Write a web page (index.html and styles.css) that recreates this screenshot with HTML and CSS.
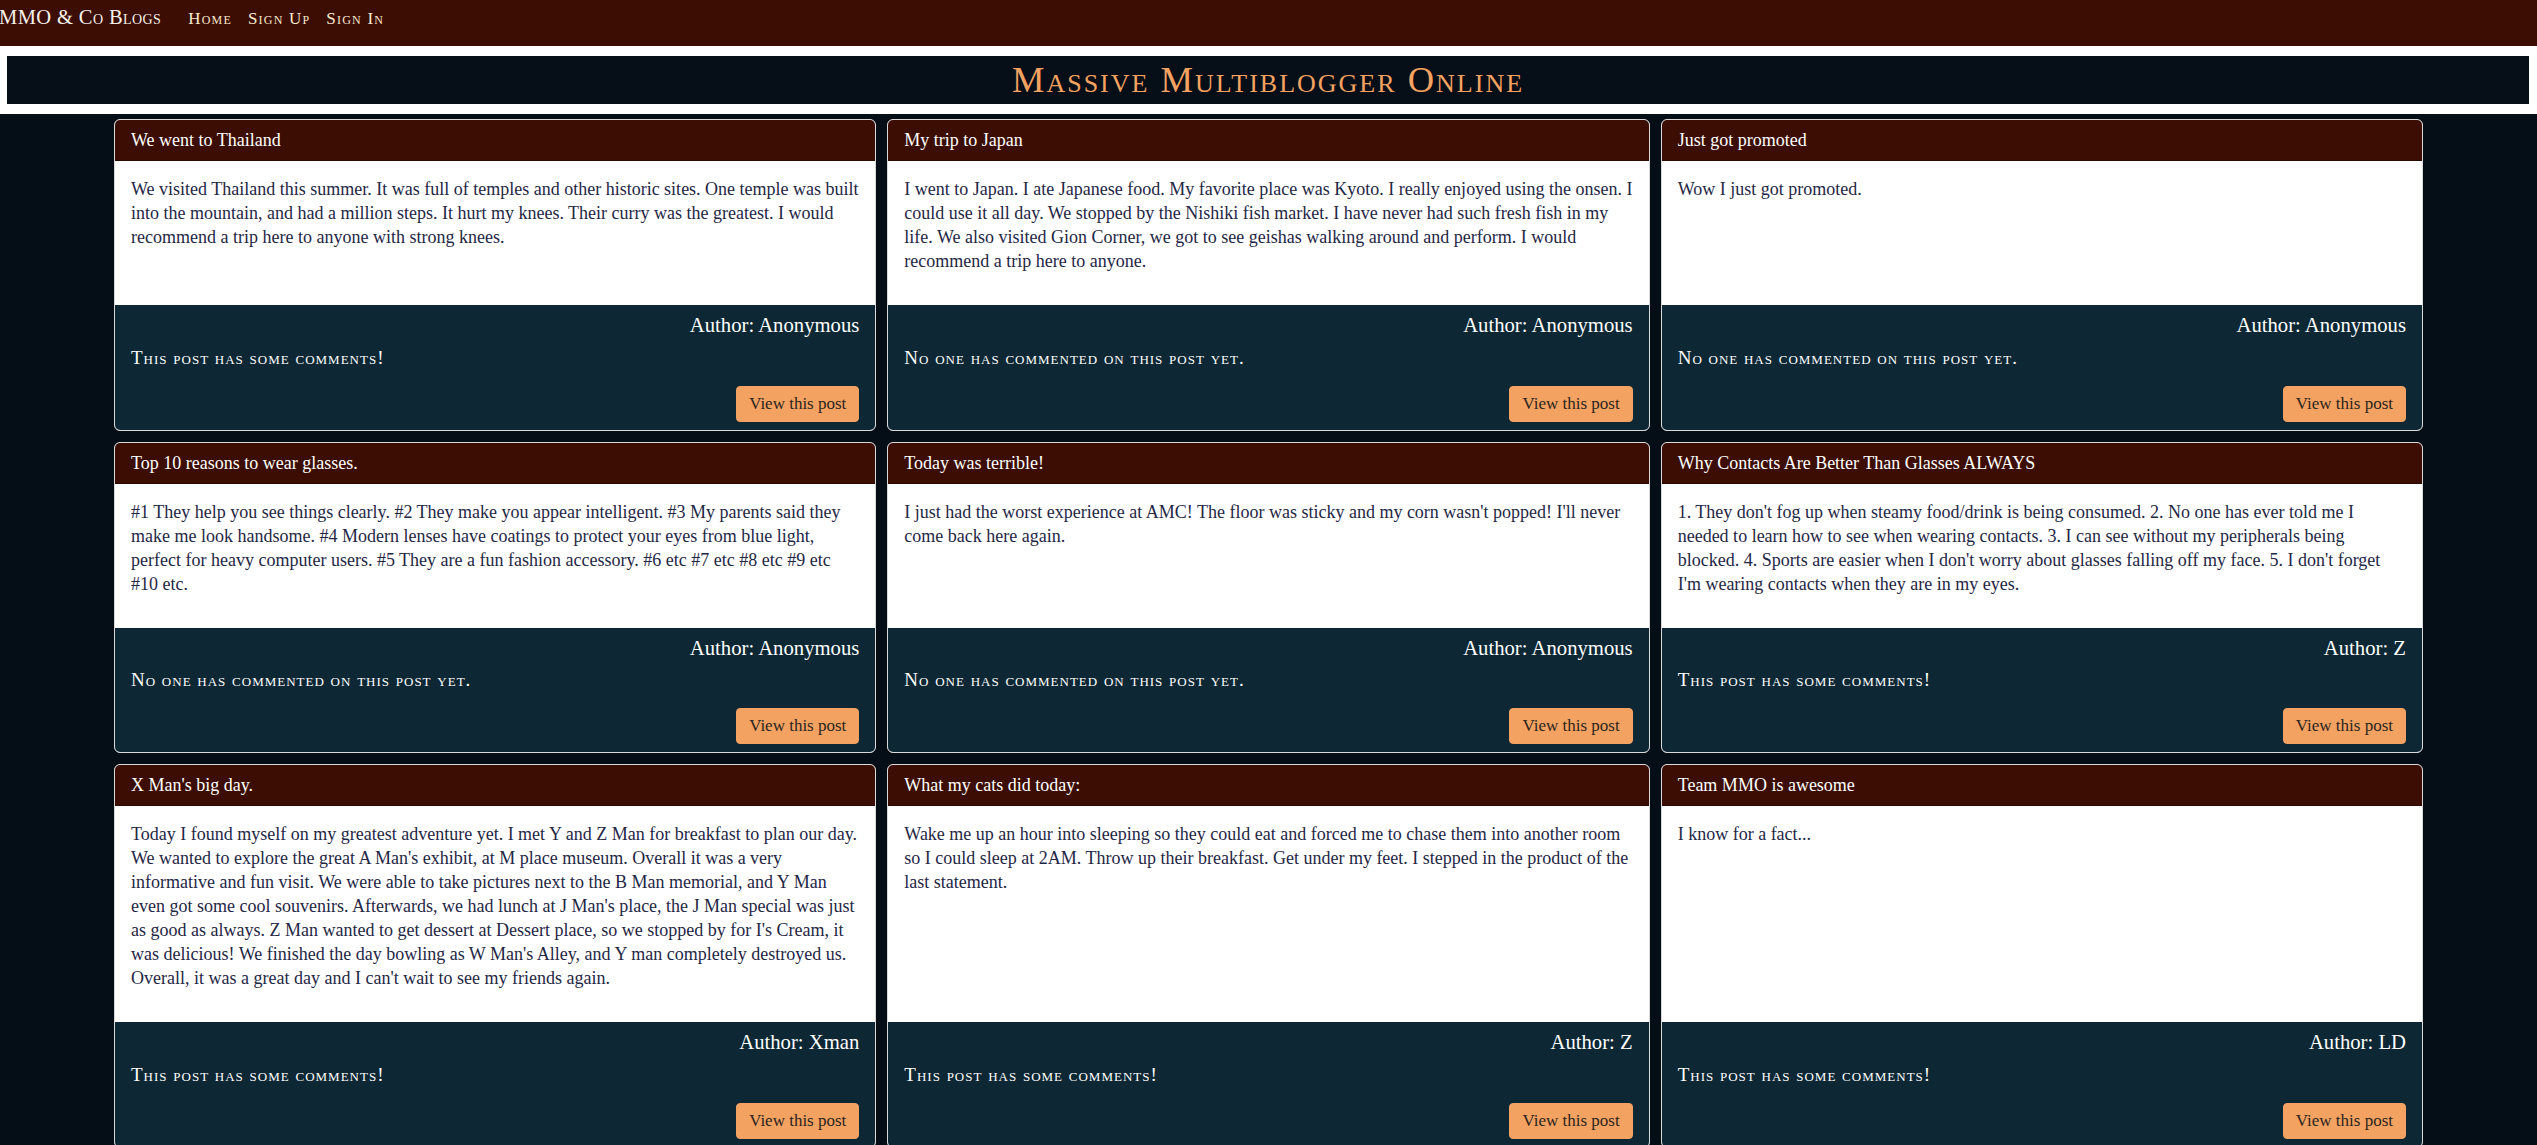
FILE: index.html
```html
<!DOCTYPE html>
<html lang="en">
<head>
<meta charset="utf-8">
<title>MMO &amp; Co Blogs</title>
<link rel="stylesheet" href="styles.css">
</head>
<body>
<nav class="navbar">
  <a class="brand" href="#">MMO &amp; Co Blogs</a>
  <a class="nav-link" href="#">Home</a>
  <a class="nav-link" href="#">Sign Up</a>
  <a class="nav-link" href="#">Sign In</a>
</nav>
<header class="banner">
  <div class="banner-box"><h1 class="banner-title">Massive Multiblogger Online</h1></div>
</header>
<main class="posts">
  <article class="card">
    <div class="card-header">We went to Thailand</div>
    <div class="card-body"><p>We visited Thailand this summer. It was full of temples and other historic sites. One temple was built into the mountain, and had a million steps. It hurt my knees. Their curry was the greatest. I would recommend a trip here to anyone with strong knees.</p></div>
    <div class="card-footer">
      <h5 class="author">Author: Anonymous</h5>
      <p class="status">This post has some comments!</p>
      <div class="actions"><a class="btn" href="#">View this post</a></div>
    </div>
  </article>
  <article class="card">
    <div class="card-header">My trip to Japan</div>
    <div class="card-body"><p>I went to Japan. I ate Japanese food. My favorite place was Kyoto. I really enjoyed using the onsen. I could use it all day. We stopped by the Nishiki fish market. I have never had such fresh fish in my life. We also visited Gion Corner, we got to see geishas walking around and perform. I would recommend a trip here to anyone.</p></div>
    <div class="card-footer">
      <h5 class="author">Author: Anonymous</h5>
      <p class="status">No one has commented on this post yet.</p>
      <div class="actions"><a class="btn" href="#">View this post</a></div>
    </div>
  </article>
  <article class="card">
    <div class="card-header">Just got promoted</div>
    <div class="card-body"><p>Wow I just got promoted.</p></div>
    <div class="card-footer">
      <h5 class="author">Author: Anonymous</h5>
      <p class="status">No one has commented on this post yet.</p>
      <div class="actions"><a class="btn" href="#">View this post</a></div>
    </div>
  </article>
  <article class="card">
    <div class="card-header">Top 10 reasons to wear glasses.</div>
    <div class="card-body"><p>#1 They help you see things clearly. #2 They make you appear intelligent. #3 My parents said they make me look handsome. #4 Modern lenses have coatings to protect your eyes from blue light, perfect for heavy computer users. #5 They are a fun fashion accessory. #6 etc #7 etc #8 etc #9 etc #10 etc.</p></div>
    <div class="card-footer">
      <h5 class="author">Author: Anonymous</h5>
      <p class="status">No one has commented on this post yet.</p>
      <div class="actions"><a class="btn" href="#">View this post</a></div>
    </div>
  </article>
  <article class="card">
    <div class="card-header">Today was terrible!</div>
    <div class="card-body"><p>I just had the worst experience at AMC! The floor was sticky and my corn wasn't popped! I'll never come back here again.</p></div>
    <div class="card-footer">
      <h5 class="author">Author: Anonymous</h5>
      <p class="status">No one has commented on this post yet.</p>
      <div class="actions"><a class="btn" href="#">View this post</a></div>
    </div>
  </article>
  <article class="card">
    <div class="card-header">Why Contacts Are Better Than Glasses ALWAYS</div>
    <div class="card-body"><p>1. They don't fog up when steamy food/drink is being consumed. 2. No one has ever told me I needed to learn how to see when wearing contacts. 3. I can see without my peripherals being blocked. 4. Sports are easier when I don't worry about glasses falling off my face. 5. I don't forget I'm wearing contacts when they are in my eyes.</p></div>
    <div class="card-footer">
      <h5 class="author">Author: Z</h5>
      <p class="status">This post has some comments!</p>
      <div class="actions"><a class="btn" href="#">View this post</a></div>
    </div>
  </article>
  <article class="card">
    <div class="card-header">X Man's big day.</div>
    <div class="card-body"><p>Today I found myself on my greatest adventure yet. I met Y and Z Man for breakfast to plan our day. We wanted to explore the great A Man's exhibit, at M place museum. Overall it was a very informative and fun visit. We were able to take pictures next to the B Man memorial, and Y Man even got some cool souvenirs. Afterwards, we had lunch at J Man's place, the J Man special was just as good as always. Z Man wanted to get dessert at Dessert place, so we stopped by for I's Cream, it was delicious! We finished the day bowling as W Man's Alley, and Y man completely destroyed us. Overall, it was a great day and I can't wait to see my friends again.</p></div>
    <div class="card-footer">
      <h5 class="author">Author: Xman</h5>
      <p class="status">This post has some comments!</p>
      <div class="actions"><a class="btn" href="#">View this post</a></div>
    </div>
  </article>
  <article class="card">
    <div class="card-header">What my cats did today:</div>
    <div class="card-body"><p>Wake me up an hour into sleeping so they could eat and forced me to chase them into another room so I could sleep at 2AM. Throw up their breakfast. Get under my feet. I stepped in the product of the last statement.</p></div>
    <div class="card-footer">
      <h5 class="author">Author: Z</h5>
      <p class="status">This post has some comments!</p>
      <div class="actions"><a class="btn" href="#">View this post</a></div>
    </div>
  </article>
  <article class="card">
    <div class="card-header">Team MMO is awesome</div>
    <div class="card-body"><p>I know for a fact...</p></div>
    <div class="card-footer">
      <h5 class="author">Author: LD</h5>
      <p class="status">This post has some comments!</p>
      <div class="actions"><a class="btn" href="#">View this post</a></div>
    </div>
  </article>
</main>
</body>
</html>
```
FILE: styles.css
```css
* { box-sizing: border-box; }
html, body { margin: 0; padding: 0; }
body {
  font-family: "Liberation Serif", "Times New Roman", serif;
  background: #050d16;
  color: #1e2440;
}
a { text-decoration: none; }

.navbar {
  display: flex;
  align-items: baseline;
  height: 46px;
  padding: 2px 0 0 0;
  background: #3c0e03;
}
.brand {
  font-size: 20.5px;
  line-height: 30px;
  font-variant: small-caps;
  letter-spacing: 0.4px;
  color: #f6f1ea;
  margin-left: -1px;
  margin-right: 19px;
}
.nav-link {
  font-size: 17px;
  line-height: 24px;
  font-variant: small-caps;
  letter-spacing: 1.2px;
  color: #fbe8cc;
  padding: 0 8px 0 8px;
}

.banner {
  background: #ffffff;
  padding: 10px 8px 10px 7px;
}
.banner-box {
  background: #060e17;
  height: 48px;
}
.banner-title {
  margin: 0;
  text-align: center;
  font-weight: normal;
  font-size: 36.5px;
  line-height: 48px;
  letter-spacing: 2px;
  font-variant: small-caps;
  color: #f4a261;
}

.posts {
  display: grid;
  grid-template-columns: repeat(3, 1fr);
  column-gap: 11px;
  row-gap: 11px;
  padding: 5px 114px 20px 114px;
  background: #050d16;
}

.card {
  display: flex;
  flex-direction: column;
  border: 1px solid #d9d9d9;
  border-radius: 6px;
  overflow: hidden;
  background: #ffffff;
}
.card-header {
  background: #3c0e03;
  color: #ffffff;
  font-size: 18px;
  line-height: 24px;
  padding: 8px 16px;
  border-bottom: 1px solid #2a0902;
}
.card-body {
  flex: 1;
  padding: 16px;
  font-size: 18px;
  line-height: 24px;
  color: #1f2745;
}
.card-body p { margin: 0 0 16px 0; }

.card-footer {
  background: #0d2735;
  color: #ffffff;
  padding: 8px 16px;
}
.author {
  margin: 0 0 8px 0;
  text-align: right;
  font-weight: normal;
  font-size: 20.7px;
  line-height: 24.6px;
  color: #ffffff;
}
.status {
  margin: 0 0 16px 0;
  font-size: 19px;
  line-height: 24px;
  font-variant: small-caps;
  letter-spacing: 1px;
  color: #ffffff;
}
.actions { text-align: right; }
.btn {
  display: inline-block;
  background: #f4a261;
  border: 1px solid #f4a261;
  border-radius: 4px;
  color: #2b2520;
  font-size: 17px;
  line-height: 24px;
  padding: 5px 12px;
}
```
